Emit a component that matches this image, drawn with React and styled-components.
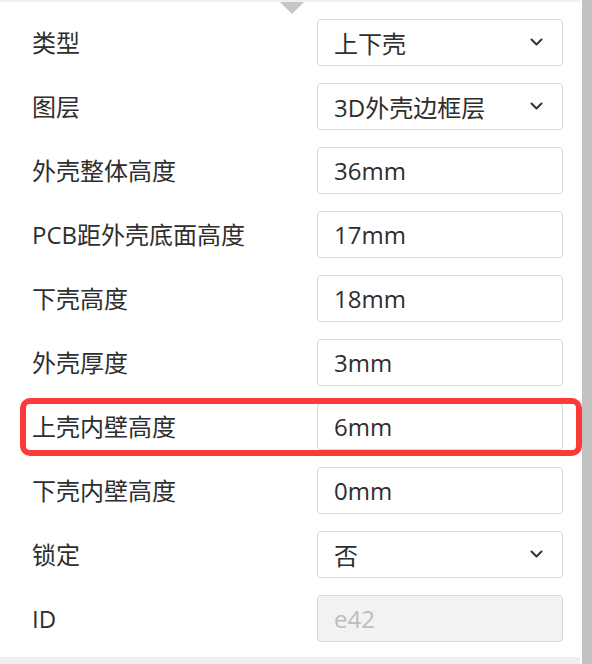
import React from 'react';
import styled, { createGlobalStyle } from 'styled-components';

const GlobalStyle = createGlobalStyle`
  html, body {
    margin: 0;
    padding: 0;
    background: #ffffff;
  }
  body {
    font-family: 'Open Sans', 'Noto Sans CJK SC', sans-serif;
  }
`;

const fields = [
  { label: '类型', value: '上下壳', type: 'select' },
  { label: '图层', value: '3D外壳边框层', type: 'select' },
  { label: '外壳整体高度', value: '36mm' },
  { label: 'PCB距外壳底面高度', value: '17mm' },
  { label: '下壳高度', value: '18mm' },
  { label: '外壳厚度', value: '3mm' },
  { label: '上壳内壁高度', value: '6mm', marked: true },
  { label: '下壳内壁高度', value: '0mm' },
  { label: '锁定', value: '否', type: 'select' },
  { label: 'ID', value: 'e42', type: 'disabled' },
];

const Chevron = () => (
  <svg width='13' height='8' viewBox='0 0 13 8' fill='none'>
    <polyline
      points='1.5,1.5 6.5,6.5 11.5,1.5'
      stroke='#333'
      strokeWidth='2'
      strokeLinecap='round'
      strokeLinejoin='round'
    />
  </svg>
);

const App = () => {
  return (
    <>
      <GlobalStyle />
      <Frame>
        <Panel>
          <Pointer />
          {fields.map((item, index) => {
            return (
              <Row key={index}>
                <Label>{item.label}</Label>
                <Control disabled={item.type === 'disabled'}>
                  <span>{item.value}</span>
                  {item.type === 'select' && <Chevron />}
                </Control>
              </Row>
            );
          })}
          <Highlight />
        </Panel>
        <Scrollbar />
      </Frame>
    </>
  );
};

export default App;

const Frame = styled.div`
  display: flex;
  width: 592px;
  height: 664px;
  overflow: hidden;
  background: #ffffff;
`;

const Panel = styled.div`
  position: relative;
  width: 580px;
  height: 664px;
  box-sizing: border-box;
  border-top: 2px solid #f0f0f0;
  border-bottom: 7px solid #eeeeee;
  padding: 16px 17px 16px 32px;
  display: flex;
  flex-direction: column;
  gap: 17px;
`;

const Pointer = styled.div`
  position: absolute;
  top: 0;
  left: 280px;
  width: 0;
  height: 0;
  border-left: 12px solid transparent;
  border-right: 12px solid transparent;
  border-top: 12px solid #c6c6c6;
`;

const Row = styled.div`
  display: grid;
  grid-template-columns: 1fr 246px;
  align-items: center;
  height: 47px;
`;

const Label = styled.div`
  font-size: 24px;
  color: #2e2e2e;
  line-height: 47px;
  padding-top: 1px;
  white-space: nowrap;
`;

const Control = styled.div`
  height: 47px;
  box-sizing: border-box;
  display: flex;
  align-items: center;
  justify-content: space-between;
  padding: 0 19px 0 16px;
  border: 1px solid #d9d9d9;
  border-radius: 4px;
  background: ${(props) => (props.disabled ? '#f2f2f2' : '#ffffff')};
  color: ${(props) => (props.disabled ? '#bdbdbd' : '#2e2e2e')};
  font-size: 24px;
  white-space: nowrap;
`;

const Highlight = styled.div`
  position: absolute;
  left: 20px;
  top: 396px;
  width: 562px;
  height: 58px;
  box-sizing: border-box;
  border: 6px solid #fc3a3a;
  border-radius: 10px;
  pointer-events: none;
`;

const Scrollbar = styled.div`
  width: 10px;
  height: 664px;
  margin-left: 2px;
  background: #c1c1c1;
`;
